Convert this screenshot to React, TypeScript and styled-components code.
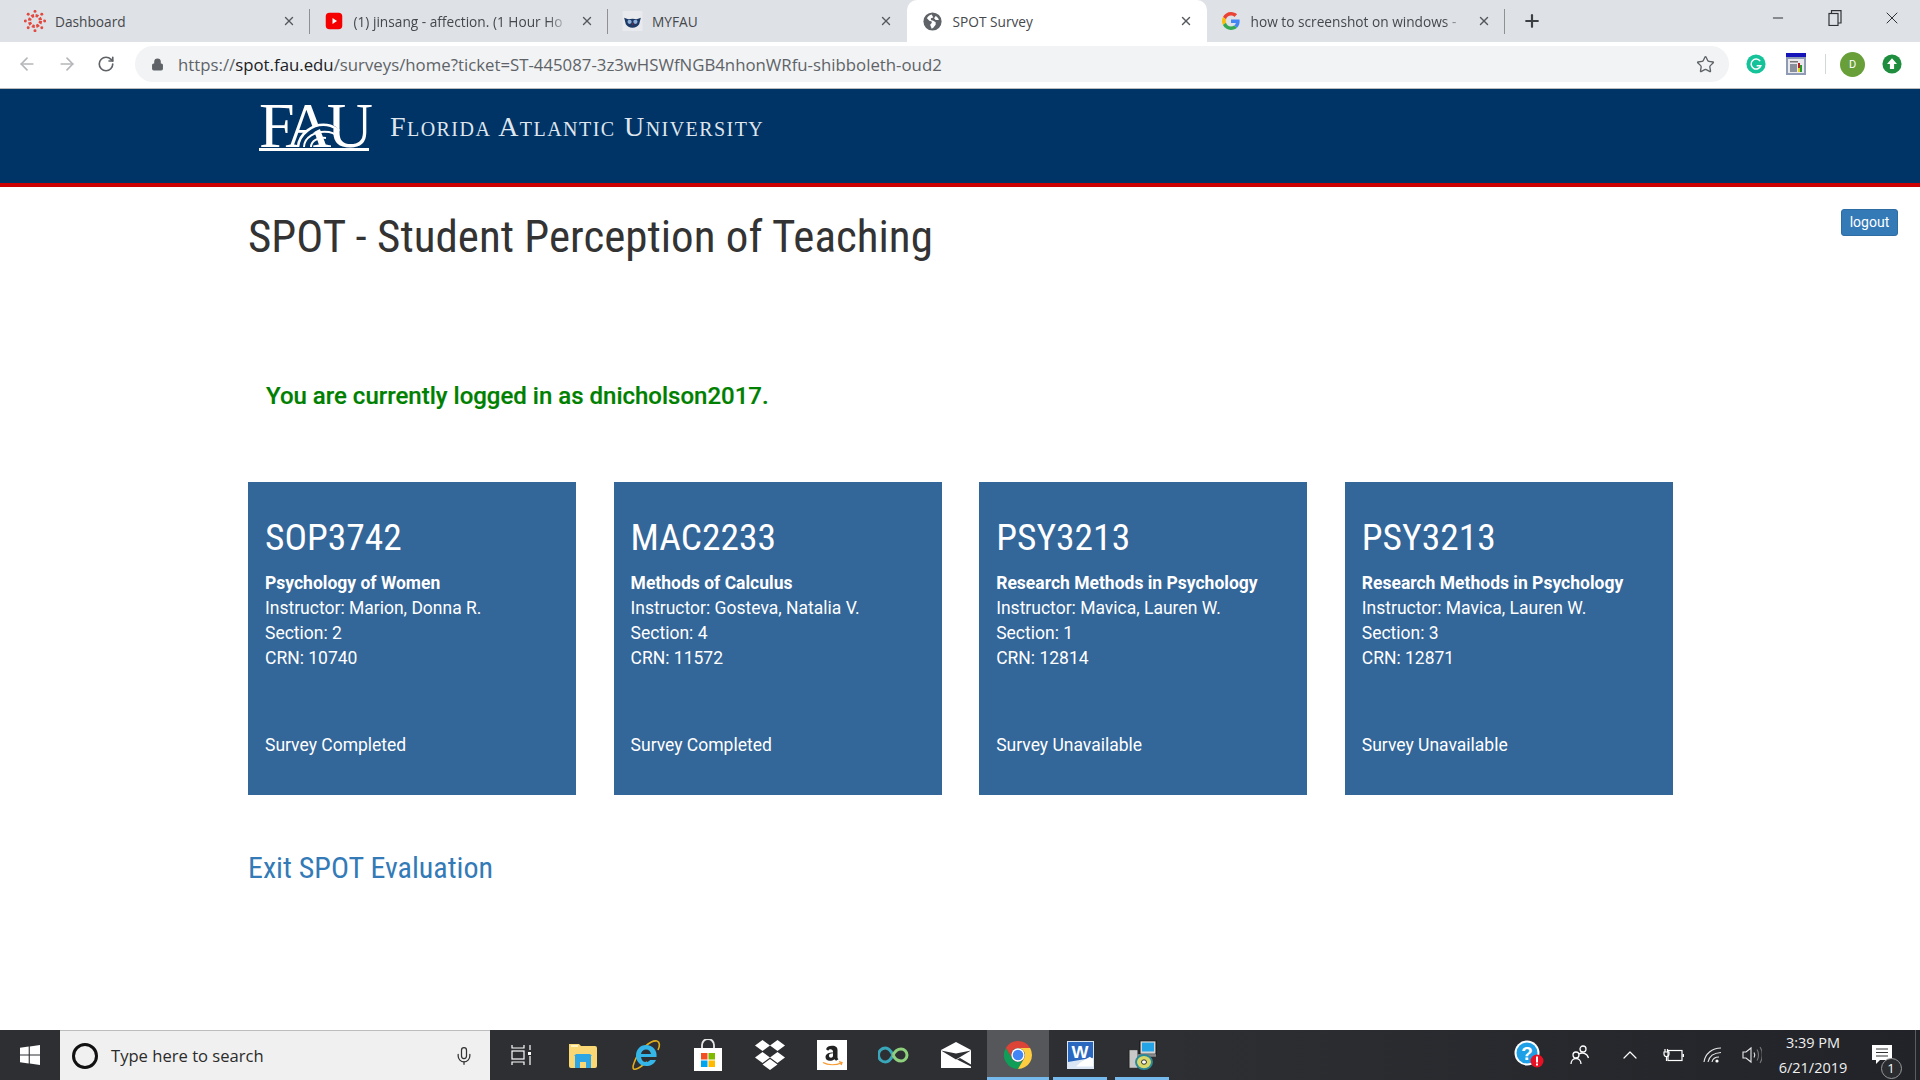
import React from "react";
import styled, { createGlobalStyle } from "styled-components";
import { ArrowLeft, ArrowRight, RotateCw, Star, Lock, Mic, ChevronUp, Plus, X, Minus } from "lucide-react";

const Global = createGlobalStyle`
  html, body { margin: 0; padding: 0; background: #fff; }
  * { box-sizing: border-box; }
`;
const Page = styled.div`
  width: 1920px; height: 1080px; display: flex; flex-direction: column; overflow: hidden;
  font-family: Roboto, "Liberation Sans", sans-serif;
`;
const TabStrip = styled.div`
  height: 42px; flex: none; background: #dee1e6; display: flex; padding-left: 11px;
  font-family: "Open Sans", "Noto Sans", sans-serif;
`;
const Tab = styled.div<{ $active?: boolean; $sep?: boolean }>`
  width: ${(p) => (p.$active ? 300 : 298.5)}px; height: 42px; display: flex; align-items: center; gap: 11px;
  padding: 0 14px 0 ${(p) => (p.$active ? 17 : 15)}px; font-size: 13.7px; position: relative; color: #3c4043;
  background: ${(p) => (p.$active ? "#fff" : "transparent")};
  border-radius: ${(p) => (p.$active ? "10px 10px 0 0" : "0")};
  ${(p) => p.$sep && "&::after { content: ''; position: absolute; right: 0; top: 9px; height: 25px; width: 1px; background: #8e9093; }"}
`;
const TabIcon = styled.span`
  width: 18px; flex: none; display: flex; justify-content: center; align-items: center;
  svg { flex: none; }
`;
const TabTitle = styled.span<{ $fade?: boolean }>`
  flex: 1; white-space: nowrap; overflow: hidden; color: #45484c;
  ${(p) => p.$fade && "mask-image: linear-gradient(to right, #000 90%, transparent 100%);"}
`;
const TabClose = styled(X)`flex: none; color: #55585c;`;
const NewTab = styled.div`
  width: 54px; display: flex; align-items: center; justify-content: center; color: #3c4043;
`;
const WindowButtons = styled.div`
  margin-left: auto; display: flex; align-items: flex-start; color: #303236; height: 42px;
`;
const WinBtn = styled.div`
  width: 57px; height: 35px; display: flex; align-items: center; justify-content: center;
`;
const Toolbar = styled.div`
  height: 47px; flex: none; background: #fff; border-bottom: 1px solid #b9babb; display: flex; align-items: center; padding: 0 0 2px 0;
`;
const NavIcons = styled.div`
  width: 135px; display: flex; align-items: center; padding-left: 17px; gap: 20px;
`;
const AddressBar = styled.div`
  width: 1594px; height: 36px; background: #f1f3f4; border-radius: 18px; display: flex; align-items: center; padding: 0 14px 0 16px; font-family: "Open Sans", "Noto Sans", sans-serif;
`;
const UrlText = styled.div`
  margin-left: 14px; flex: 1; font-size: 16.8px; color: #5f6368; white-space: nowrap;
`;
const UrlHost = styled.span`color: #202124;`;
const Extensions = styled.div`
  display: flex; align-items: center; flex: 1; padding-left: 17px;
`;
const ExtSlot = styled.div<{ $w: number }>`
  width: ${(p) => p.$w}px; display: flex; align-items: center; justify-content: center; flex: none;
`;
const ExtSep = styled.div`width: 1px; height: 20px; background: #d5d6d8; margin: 0 14px 0 19px;`;
const Avatar = styled.div`
  width: 25px; height: 25px; border-radius: 50%; background: #689f38; color: #fff; font-size: 11px; display: flex; align-items: center; justify-content: center; margin-right: 17px;
`;
const Banner = styled.header`
  height: 98px; flex: none; background: #003366; border-bottom: 4px solid #cc0000; display: flex; align-items: flex-start; padding: 13px 0 0 259px;
`;
const LogoMark = styled.div`
  width: 115px; height: 50px; position: relative; flex: none;
`;
const LogoLetters = styled.div`
  font-family: "Liberation Serif", serif; font-size: 64px; line-height: 48px; color: #fff; letter-spacing: -4.6px; white-space: nowrap; height: 46px;
`;
const LogoRule = styled.div`height: 3px; width: 110px; background: #fff;`;
const LogoWave = styled.svg`position: absolute; left: 36px; top: 20px;`;
const LogoName = styled.div`
  margin: 7px 0 0 16px; font-family: "Liberation Serif", serif; font-variant: small-caps; font-size: 28px; line-height: 36px; color: #dfe6ee; white-space: nowrap; letter-spacing: 1.45px;
`;
const Main = styled.main`flex: 1; background: #fff; padding: 22px 22px 0 248px; display: flex; flex-direction: column;`;
const TitleRow = styled.div`display: flex; justify-content: space-between; align-items: flex-start; height: 56px;`;
const Title = styled.h1`
  margin: 0; font-family: "Roboto Condensed", "Liberation Sans Narrow", Roboto, sans-serif; font-weight: 400; font-size: 45px; line-height: 56px; color: #333; white-space: nowrap;
`;
const Logout = styled.button`
  width: 57px; height: 27px; padding: 0 0 2px; border: 1px solid #2e6da4; border-radius: 3px; background: #337ab7; color: #fff; font-family: Roboto, sans-serif; font-size: 14px;
`;
const Status = styled.p`
  margin: 115px 0 0 18px; font-size: 24px; line-height: 32px; font-weight: 500; color: #008000; white-space: nowrap; -webkit-text-stroke: .2px #008000;
`;
const CardRow = styled.div`
  margin-top: 70px; display: grid; grid-template-columns: repeat(4, 328.25px); column-gap: 37.35px;
`;
const Card = styled.article`
  height: 313px; background: #336699; color: #fff; padding: 35px 17px 0; display: flex; flex-direction: column;
`;
const CardCode = styled.h2`
  margin: 0; font-family: "Roboto Condensed", "Liberation Sans Narrow", Roboto, sans-serif; font-weight: 400; font-size: 37.5px; line-height: 40px; white-space: nowrap;
`;
const CardLines = styled.div`margin-top: 14px; font-size: 17.5px; line-height: 25px;`;
const CardName = styled.div`font-weight: 700;`;
const CardState = styled.div`margin-top: 62px; font-size: 17.5px; line-height: 25px;`;
const ExitLink = styled.a`
  margin-top: 53px; font-family: "Roboto Condensed", "Liberation Sans Narrow", Roboto, sans-serif; font-size: 30px; line-height: 40px; color: #337ab7; align-self: flex-start;
`;
const Taskbar = styled.footer`
  height: 50px; flex: none; display: flex; align-items: stretch; color: #fff;
  background: linear-gradient(to right, #2d2f33, #2d2f33 60%, #212328);
  font-family: "Open Sans", "Noto Sans", sans-serif;
`;
const StartBtn = styled.div`width: 60px; display: flex; align-items: center; justify-content: center;`;
const SearchBox = styled.div`
  width: 430px; background: #f0f0f0; border-top: 1px solid #bdbdbd; display: flex; align-items: center; color: #2b2b2b; font-size: 16.6px; padding-left: 11px;
`;
const SearchText = styled.span`margin-left: 12px; flex: 1;`;
const MicSlot = styled.span`display: flex; margin-right: 16px; color: #333;`;
const TaskCell = styled.div<{ $w?: number; $active?: boolean; $open?: boolean }>`
  width: ${(p) => p.$w ?? 62}px; flex: none; display: flex; align-items: center; justify-content: center; position: relative;
  background: ${(p) => (p.$active ? "#55575a" : "transparent")};
  ${(p) => (p.$open || p.$active) && `&::after { content: ''; position: absolute; bottom: 0; left: ${p.$active ? 0 : 4}px; right: ${p.$active ? 0 : 4}px; height: 3px; background: #76b9ed; }`}
`;
const Tray = styled.div`
  margin: 0 4px 0 auto; display: flex; align-items: center; padding-right: 7px; border-right: 1px solid #5a5c60;
`;
const TraySlot = styled.div<{ $w: number }>`
  width: ${(p) => p.$w}px; display: flex; align-items: center; justify-content: center; flex: none; position: relative;
`;
const Clock = styled.div`
  width: 84px; text-align: center; font-size: 14.5px; line-height: 25px; color: #f0f0f0; white-space: nowrap;
`;
const NotifCount = styled.span`
  position: absolute; right: 6.500px; bottom: -14px; width: 21px; height: 21px; border-radius: 50%; border: 1px solid #9a9a9a; background: #2a2c30; color: #fff; font-size: 13px; line-height: 19px; text-align: center;
`;

const Canvas = () => (
  <svg width="22" height="22" viewBox="0 0 24 24" fill="#e2493f">
    <circle cx="12" cy="12" r="6" fill="none" stroke="#e2493f" strokeWidth="3.500" strokeDasharray="3 1.700" />
    {[0, 45, 90, 135, 180, 225, 270, 315].map((a) => (
      <circle key={a} cx={12 + 10.5 * Math.cos((a * Math.PI) / 180)} cy={12 + 10.5 * Math.sin((a * Math.PI) / 180)} r="1.600" />
    ))}
  </svg>
);
const YouTube = () => (
  <svg width="18" height="18" viewBox="0 0 24 24">
    <rect x="1" y="1" width="22" height="22" rx="5" fill="#f40000" />
    <path d="M10 8l6 4-6 4z" fill="#fff" />
  </svg>
);
const Owl = () => (
  <svg width="21" height="20" viewBox="0 0 24 24">
    <rect width="24" height="24" fill="#e8eaed" />
    <path d="M2 8l5 2c3-1 7-1 10 0l5-2-2 8c-2 3-4 4-8 4s-6-1-8-4z" fill="#1d3a66" />
    <circle cx="8.500" cy="13" r="2.500" fill="#8fb0d8" />
    <circle cx="15.500" cy="13" r="2.500" fill="#8fb0d8" />
    <path d="M11 15h2l-1 2z" fill="#c8102e" />
  </svg>
);
const Globe = () => (
  <svg width="19" height="19" viewBox="0 0 24 24">
    <circle cx="12" cy="12" r="11.500" fill="#5f6368" />
    <path d="M11 3c-3 1-5 2-6 5l3 3 3 1v2l-2 2 2 5 2-1 3-4v-3l-3-2-3-1v-2l3-1zM16 5l-2 3 2 2 4 0c-.4-2-2-4-4-5z" fill="#fff" />
  </svg>
);
const GoogleG = ({ size = 18 }: { size?: number }) => (
  <svg width={size} height={size} viewBox="0 0 48 48">
    <path fill="#EA4335" d="M24 9.500c3.540 0 6.710 1.220 9.210 3.600l6.850-6.850C35.900 2.380 30.470 0 24 0 14.620 0 6.510 5.380 2.560 13.220l7.980 6.190C12.430 13.720 17.740 9.500 24 9.500z" />
    <path fill="#4285F4" d="M46.980 24.550c0-1.570-.15-3.090-.38-4.550H24v9.020h12.940c-.58 2.960-2.260 5.480-4.780 7.180l7.730 6c4.510-4.180 7.090-10.360 7.090-17.650z" />
    <path fill="#FBBC05" d="M10.530 28.590c-.48-1.450-.76-2.990-.76-4.590s.27-3.140.76-4.590l-7.980-6.190C.92 16.460 0 20.120 0 24c0 3.880.92 7.540 2.560 10.780l7.970-6.190z" />
    <path fill="#34A853" d="M24 48c6.480 0 11.930-2.130 15.890-5.810l-7.730-6c-2.150 1.450-4.920 2.300-8.160 2.300-6.260 0-11.570-4.220-13.470-9.910l-7.980 6.190C6.510 42.620 14.620 48 24 48z" />
  </svg>
);
const Grammarly = () => (
  <svg width="20" height="22" viewBox="0 0 24 24">
    <circle cx="12" cy="12" r="11.500" fill="#15c39a" />
    <path d="M17 8.500a6 6 0 1 0 .8 5.500h-5" fill="none" stroke="#fff" strokeWidth="1.800" />
  </svg>
);
const ExtWindow = () => (
  <svg width="20" height="22" viewBox="0 0 20 22">
    <rect width="20" height="22" fill="#8f9bb5" />
    <rect width="20" height="4" fill="#1414b8" />
    <rect x="2" y="6" width="16" height="14" fill="#e9e9ee" />
    <rect x="4" y="8" width="8" height="1.500" fill="#777" />
    <rect x="4" y="11" width="7" height="8" fill="#8a8f9c" />
    <rect x="12" y="10" width="2" height="5" fill="#b81c1c" />
    <rect x="14" y="12" width="2" height="7" fill="#1e9b32" />
    <rect x="12" y="15" width="2" height="4" fill="#e5d21f" />
  </svg>
);
const UpdateArrow = () => (
  <svg width="20" height="22" viewBox="0 0 24 24">
    <circle cx="12" cy="12" r="11.500" fill="#1e8e3e" />
    <path d="M12 5l6 7h-3.500v6h-5v-6H6z" fill="#fff" />
  </svg>
);
const WindowsLogo = () => (
  <svg width="20" height="20" viewBox="0 0 20 20" fill="#fff">
    <path d="M0 2.800 8.700 1.600V9.500H0zM9.800 1.400 20 0v9.500H9.800zM0 10.500h8.700v7.900L0 17.200zM9.800 10.500H20V20L9.800 18.600z" />
  </svg>
);
const Cortana = () => (
  <svg width="28" height="28" viewBox="0 0 28 28">
    <circle cx="14" cy="14" r="11.500" fill="none" stroke="#111" strokeWidth="3" />
  </svg>
);
const TaskView = () => (
  <svg width="20" height="20" viewBox="0 0 20 20" fill="none" stroke="#fff" strokeWidth="1.200">
    <rect x="1" y="6" width="12" height="8" />
    <path d="M1 0v3h12V0M1 20v-3h12v3M19 0v5M19 11v9" />
    <rect x="17" y="7" width="3" height="3" fill="#fff" stroke="none" />
  </svg>
);
const Folder = () => (
  <svg width="28" height="26" viewBox="0 0 28 26">
    <path d="M0 2h10l2 2h14a2 2 0 0 1 2 2v18a2 2 0 0 1-2 2H2a2 2 0 0 1-2-2z" fill="#f9d774" />
    <rect x="2" y="3" width="7" height="2" fill="#fff3c4" />
    <path d="M5 14h18l-2-2H7zM6 14h16v12h-5v-6h-6v6H6z" fill="#2ea6e6" />
  </svg>
);
const IE = () => (
  <svg width="30" height="32" viewBox="0 0 30 32">
    <path d="M26 2C20 1 8 10 3 24c-2 5-1 7 2 6 4-1 8-5 11-7" fill="none" stroke="#e2b01e" strokeWidth="1.600" />
    <path d="M26 2c3 1 3 5 1 9" fill="none" stroke="#e2b01e" strokeWidth="1.600" />
    <path d="M15 6c-6 0-10 5-10 10.500S9 27 15 27c5 0 8-2 10-6h-6c-1 1.500-2.500 2-4 2-3 0-4.500-2-5-5h15.500c1-7-4-12-10.500-12zm-5 9c.5-3 2.500-4.500 5-4.500 3 0 4.500 2 5 4.500z" fill="#34b7e8" />
  </svg>
);
const Store = () => (
  <svg width="30" height="32" viewBox="0 0 30 32">
    <path d="M9 10V6a6 6 0 0 1 12 0v4" fill="none" stroke="#e7e7e7" strokeWidth="1.800" />
    <rect x="1" y="9" width="28" height="23" fill="#fff" />
    <rect x="8" y="14" width="6.500" height="6.500" fill="#f25022" />
    <rect x="15.500" y="14" width="6.500" height="6.500" fill="#7fba00" />
    <rect x="8" y="21.500" width="6.500" height="6.500" fill="#00a4ef" />
    <rect x="15.500" y="21.500" width="6.500" height="6.500" fill="#ffb900" />
  </svg>
);
const Dropbox = () => (
  <svg width="30" height="32" viewBox="0 0 30 32" fill="#fff">
    <path d="M7.500 1 15 6.500 7.500 12 0 6.500zM22.500 1 30 6.500 22.500 12 15 6.500zM7.500 13 15 18.500 7.500 24 0 18.500zM22.500 13 30 18.500 22.500 24 15 18.500zM15 20l7.500 5.500L15 31l-7.500-5.500z" />
  </svg>
);
const Amazon = () => (
  <svg width="30" height="30" viewBox="0 0 30 36" preserveAspectRatio="none">
    <rect width="30" height="36" fill="#fff" />
    <path d="M9 11c1-3 3-4 6-4 4 0 5.500 2 5.500 5v9c0 1 .5 1.500 1 2l-2.500 2-1.500-2c-1.500 1.500-3 2-4.500 2-3 0-4.500-2-4.500-4.500 0-4 3.500-5.500 7.500-5.500v-1c0-2-1-3-2.500-3-1.200 0-2 .8-2.300 2zM16 16c-2.500 0-4 .8-4 3 0 1.500.8 2.300 2 2.300 1.500 0 2-1.500 2-3z" fill="#222" />
    <path d="M6 27c5 3.500 13 3.500 18 .5M22 26l3 1-1 3" fill="none" stroke="#f79c34" strokeWidth="1.400" />
  </svg>
);
const Infinity = () => (
  <svg width="32" height="20" viewBox="0 0 32 20" fill="none" strokeWidth="3">
    <path d="M15 10c-2-4-4-7-7.500-7a7 7 0 0 0 0 14c3.500 0 5.500-3 7.500-7" stroke="#3aa6b9" />
    <path d="M15 10c2-4 4-6 8-6a6 6 0 0 1 0 12c-4 0-6-2-8-6" stroke="#8fd07c" />
  </svg>
);
const Mail = () => (
  <svg width="30" height="26" viewBox="0 0 30 26">
    <path d="M0 8 15 0l15 8v18H0z" fill="#fff" />
    <path d="M0 8.500l15 9 15-9-15 3z" fill="#2d2f33" />
    <path d="M16 17.500l14 7v-2l-11-6.500z" fill="#2d2f33" />
  </svg>
);
const Chrome = () => (
  <svg width="28" height="32" viewBox="0 0 48 48">
    <path fill="#db4437" d="M24 12h20.780A24 24 0 0 0 3.200 12l10.400 18A12 12 0 0 1 24 12z" />
    <path fill="#0f9d58" d="M13.600 30 3.200 12A24 24 0 0 0 24 48l10.400-18a12 12 0 0 1-20.800 0z" />
    <path fill="#ffcd40" d="M34.400 30 24 48A24 24 0 0 0 44.780 12H24a12 12 0 0 1 10.400 18z" />
    <circle cx="24" cy="24" r="11.500" fill="#fff" />
    <circle cx="24" cy="24" r="9" fill="#4285f4" />
  </svg>
);
const WordIcon = () => (
  <svg width="27" height="28" viewBox="0 0 27 32" preserveAspectRatio="none">
    <rect width="27" height="32" fill="#dbe6f5" />
    <path d="M1 1h25v18L1 24z" fill="#2a68bf" />
    <path d="M14 24l9-6 3 3v8H9z" fill="#fff" />
    <text x="13" y="19" fontFamily="Liberation Sans, sans-serif" fontSize="18" fontWeight="700" fill="#fff" textAnchor="middle">W</text>
  </svg>
);
const Installer = () => (
  <svg width="30" height="30" viewBox="0 0 30 34" preserveAspectRatio="none">
    <rect x="13" y="1" width="16" height="15" fill="#d4d4d4" stroke="#111" />
    <rect x="15" y="3" width="12" height="10" fill="#24a4e4" />
    <rect x="2" y="11" width="9" height="21" fill="#c8c8c8" stroke="#222" />
    <rect x="10" y="16" width="19" height="3" fill="#888" />
    <circle cx="17" cy="25" r="8" fill="#d8d86a" stroke="#2a8a9a" strokeWidth="2" />
    <circle cx="17" cy="25" r="2.500" fill="#fff" stroke="#222" />
  </svg>
);
const HelpBadge = () => (
  <svg width="30" height="30" viewBox="0 0 30 30">
    <circle cx="13" cy="13" r="12.500" fill="#fff" />
    <circle cx="13" cy="13" r="10.500" fill="#1e9fe6" />
    <text x="13" y="20" fontFamily="Liberation Sans, sans-serif" fontSize="19" fontWeight="700" fill="#fff" textAnchor="middle">?</text>
    <circle cx="23" cy="21" r="6.500" fill="#e81123" />
    <rect x="22" y="16.500" width="2" height="6" fill="#fff" />
    <rect x="22" y="23.500" width="2" height="2" fill="#fff" />
  </svg>
);
const People = () => (
  <svg width="20" height="20" viewBox="0 0 20 20" fill="none" stroke="#fff" strokeWidth="1.300">
    <circle cx="6" cy="10" r="3" />
    <circle cx="13" cy="4" r="3" />
    <path d="M1 19c0-3 2-5.500 5-5.500S11 16 11 19M9 9c3-2 8-1 9.500 4" />
  </svg>
);
const Battery = () => (
  <svg width="21" height="14" viewBox="0 0 21 14" fill="none" stroke="#fff" strokeWidth="1.200">
    <rect x="5" y="2.500" width="14" height="10" />
    <rect x="19.500" y="6" width="1.500" height="3" fill="#fff" stroke="none" />
    <path d="M2 1v3M4.500 1v3M1 4h5v2a2.500 2.500 0 0 1-5 0zM3.500 8.500V13" />
  </svg>
);
const Wifi = () => (
  <svg width="20" height="16" viewBox="0 0 20 16" fill="none" stroke="#e8e8e8" strokeWidth="1.100">
    <path d="M1 15C2 7 9 1 18 1M5 15C6 10 10 6 18 5.500M9 15c.5-2.500 3-5 7-5" />
    <circle cx="14" cy="14" r="1.600" fill="#fff" stroke="none" />
  </svg>
);
const Speaker = () => (
  <svg width="20" height="18" viewBox="0 0 20 18" fill="none" stroke="#e8e8e8" strokeWidth="1.100">
    <path d="M1 6h3l5-4v14l-5-4H1z" />
    <path d="M12 6.500c1 1.500 1 3.500 0 5" />
    <path d="M15 3.500c2 3 2 8 0 11M18 1c3 4 3 12 0 16" stroke="#777" />
  </svg>
);
const NotifIcon = () => (
  <svg width="20" height="20" viewBox="0 0 20 20">
    <path d="M0 0h20v15H8l-4 4v-4H0z" fill="#fff" />
    <path d="M4 4h12M4 7.500h12M4 11h12" stroke="#333" strokeWidth="1" />
  </svg>
);

const tabs = [
  { icon: <Canvas />, title: "Dashboard" },
  { icon: <YouTube />, title: "(1) jinsang - affection. (1 Hour Ho", fade: true },
  { icon: <Owl />, title: "MYFAU" },
];
const courses = [
  { code: "SOP3742", name: "Psychology of Women", who: "Marion, Donna R.", section: 2, crn: 10740, state: "Survey Completed" },
  { code: "MAC2233", name: "Methods of Calculus", who: "Gosteva, Natalia V.", section: 4, crn: 11572, state: "Survey Completed" },
  { code: "PSY3213", name: "Research Methods in Psychology", who: "Mavica, Lauren W.", section: 1, crn: 12814, state: "Survey Unavailable" },
  { code: "PSY3213", name: "Research Methods in Psychology", who: "Mavica, Lauren W.", section: 3, crn: 12871, state: "Survey Unavailable" },
];

export default function App() {
  return (
    <Page>
      <Global />
      <TabStrip>
        {tabs.map((t) => (
          <Tab key={t.title} $sep={t.title !== "MYFAU"}>
            <TabIcon>{t.icon}</TabIcon>
            <TabTitle $fade={t.fade}>{t.title}</TabTitle>
            <TabClose size={14} strokeWidth={2.400} />
          </Tab>
        ))}
        <Tab $active>
          <TabIcon><Globe /></TabIcon>
          <TabTitle>SPOT Survey</TabTitle>
          <TabClose size={14} strokeWidth={2.400} />
        </Tab>
        <Tab $sep>
          <TabIcon><GoogleG /></TabIcon>
          <TabTitle $fade>how to screenshot on windows -</TabTitle>
          <TabClose size={14} strokeWidth={2.400} />
        </Tab>
        <NewTab><Plus size={20} strokeWidth={2.600} /></NewTab>
        <WindowButtons>
          <WinBtn><Minus size={16} strokeWidth={1.500} /></WinBtn>
          <WinBtn>
            <svg width="14" height="16" viewBox="0 0 14 16" fill="none" stroke="#303236" strokeWidth="1.200">
              <rect x="1" y="3.500" width="9" height="12" />
              <path d="M3.500 3V.6H13V13h-3" />
            </svg>
          </WinBtn>
          <WinBtn><X size={20} strokeWidth={1.200} /></WinBtn>
        </WindowButtons>
      </TabStrip>
      <Toolbar>
        <NavIcons>
          <ArrowLeft size={20} color="#b4b6b9" strokeWidth={2} />
          <ArrowRight size={20} color="#b4b6b9" strokeWidth={2} />
          <RotateCw size={18} color="#5f6368" strokeWidth={2.200} />
        </NavIcons>
        <AddressBar>
          <Lock size={13} color="#5f6368" fill="#5f6368" />
          <UrlText>https://<UrlHost>spot.fau.edu</UrlHost>/surveys/home?ticket=ST-445087-3z3wHSWfNGB4nhonWRfu-shibboleth-oud2</UrlText>
          <Star size={19} color="#5f6368" strokeWidth={1.700} />
        </AddressBar>
        <Extensions>
          <ExtSlot $w={20}><Grammarly /></ExtSlot>
          <ExtSlot $w={20} />
          <ExtSlot $w={20}><ExtWindow /></ExtSlot>
          <ExtSep />
          <Avatar>D</Avatar>
          <ExtSlot $w={20}><UpdateArrow /></ExtSlot>
        </Extensions>
      </Toolbar>
      <Banner>
        <LogoMark>
          <LogoLetters>FAU</LogoLetters>
          <LogoRule />
          <LogoWave width="48" height="26" viewBox="0 0 48 26" fill="none" stroke="#fff">
            <path d="M3 26C4 12 16 2 30 2c7 0 11 2 14 6-8-3-20-3-27 4-3 3-4 8-3 14" fill="#003366" stroke="none" />
            <path d="M3 25C4 12 18 1 32 3c6 1 9 3 12 6" strokeWidth="2.600" />
            <path d="M9 25C9 16 20 8 34 10c3 .5 5 1.500 7 3" strokeWidth="2" />
            <path d="M16 25c0-6 7-10 15-9" strokeWidth="2" />
          </LogoWave>
        </LogoMark>
        <LogoName>Florida Atlantic University</LogoName>
      </Banner>
      <Main>
        <TitleRow>
          <Title>SPOT - Student Perception of Teaching</Title>
          <Logout>logout</Logout>
        </TitleRow>
        <Status>You are currently logged in as dnicholson2017.</Status>
        <CardRow>
          {courses.map((c) => (
            <Card key={c.crn}>
              <CardCode>{c.code}</CardCode>
              <CardLines>
                <CardName>{c.name}</CardName>
                <div>Instructor: {c.who}</div>
                <div>Section: {c.section}</div>
                <div>CRN: {c.crn}</div>
              </CardLines>
              <CardState>{c.state}</CardState>
            </Card>
          ))}
        </CardRow>
        <ExitLink>Exit SPOT Evaluation</ExitLink>
      </Main>
      <Taskbar>
        <StartBtn><WindowsLogo /></StartBtn>
        <SearchBox>
          <Cortana />
          <SearchText>Type here to search</SearchText>
          <MicSlot><Mic size={20} strokeWidth={1.500} /></MicSlot>
        </SearchBox>
        <TaskCell $w={61}><TaskView /></TaskCell>
        <TaskCell $w={64}><Folder /></TaskCell>
        <TaskCell><IE /></TaskCell>
        <TaskCell><Store /></TaskCell>
        <TaskCell><Dropbox /></TaskCell>
        <TaskCell><Amazon /></TaskCell>
        <TaskCell><Infinity /></TaskCell>
        <TaskCell><Mail /></TaskCell>
        <TaskCell $active><Chrome /></TaskCell>
        <TaskCell $open><WordIcon /></TaskCell>
        <TaskCell $open><Installer /></TaskCell>
        <Tray>
          <TraySlot $w={52}><HelpBadge /></TraySlot>
          <TraySlot $w={50}><People /></TraySlot>
          <TraySlot $w={49}><ChevronUp size={24} strokeWidth={1.200} /></TraySlot>
          <TraySlot $w={38}><Battery /></TraySlot>
          <TraySlot $w={41}><Wifi /></TraySlot>
          <TraySlot $w={38}><Speaker /></TraySlot>
          <Clock><div>3:39 PM</div><div>6/21/2019</div></Clock>
          <TraySlot $w={53}><NotifIcon /><NotifCount>1</NotifCount></TraySlot>
        </Tray>
      </Taskbar>
    </Page>
  );
}
